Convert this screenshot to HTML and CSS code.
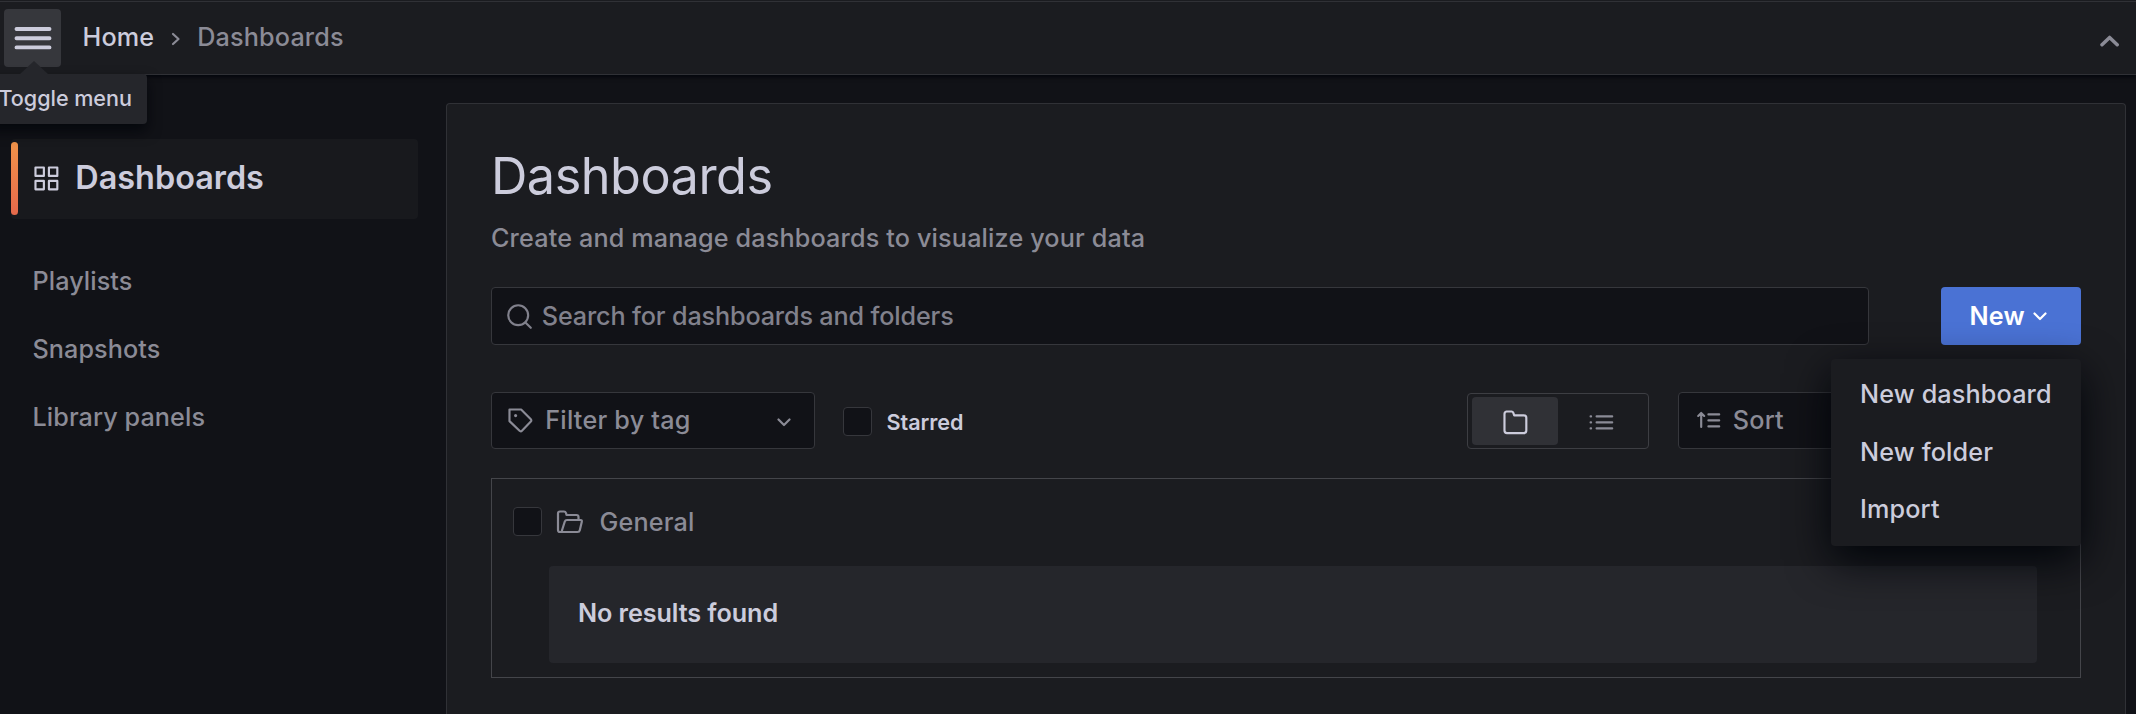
FILE: index.html
```html
<!DOCTYPE html>
<html lang="en">
<head>
<meta charset="utf-8">
<title>Dashboards</title>
<link rel="stylesheet" href="styles.css">
</head>
<body>
<header class="topbar">
  <button class="menu-toggle" aria-label="Toggle menu">
    <svg class="burger" viewBox="0 0 38 24"><path d="M2.500 3h33M2.500 12.200h33M2.500 21.400h33"/></svg>
    <span class="tooltip">Toggle menu</span>
  </button>
  <nav class="crumbs">
    <a class="crumb-home">Home</a>
    <svg class="crumb-sep" viewBox="0 0 10 14"><path d="M2 2l5.500 5L2 12"/></svg>
    <span>Dashboards</span>
  </nav>
  <svg class="collapse" viewBox="0 0 20 12"><path d="M2 9.700l7.600-7.300 7.600 7.300"/></svg>
</header>
<div class="body">
  <aside class="sidebar">
    <a class="side-active">
      <svg class="icon" viewBox="0 0 24 24"><path d="M2.900 2.900h7v7h-7zM14.100 2.900h7v7h-7zM2.900 14.100h7v7h-7zM14.100 14.100h7v7h-7z"/></svg>
      <span>Dashboards</span>
    </a>
    <a class="side-link">Playlists</a>
    <a class="side-link">Snapshots</a>
    <a class="side-link">Library panels</a>
  </aside>
  <main class="page">
    <h1 class="title">Dashboards</h1>
    <p class="subtitle">Create and manage dashboards to visualize your data</p>
    <div class="search-row">
      <div class="search">
        <svg class="icon" viewBox="0 0 24 24"><circle cx="11" cy="11" r="8.300"/><path d="M17 17l4.500 4.500"/></svg>
        <span>Search for dashboards and folders</span>
      </div>
      <div class="new-wrap">
        <button class="new-btn">New
          <svg class="chevron" viewBox="0 0 14 9"><path d="M1.500 1.500L7 7l5.500-5.500"/></svg>
        </button>
        <div class="menu">
          <a>New dashboard</a>
          <a>New folder</a>
          <a>Import</a>
        </div>
      </div>
    </div>
    <div class="filters">
      <div class="select tag-select">
        <svg class="icon" viewBox="0 0 24 24"><path d="M2.900 2.900h9.700l8.100 8.100a1.400 1.400 0 0 1 0 2l-7.400 7.700a1.400 1.400 0 0 1-2 0L2.900 12.600z"/><circle class="dot" cx="8" cy="8" r="1.300"/></svg>
        <span>Filter by tag</span>
        <svg class="chevron" viewBox="0 0 14 9"><path d="M1.500 1.500L7 7l5.500-5.500"/></svg>
      </div>
      <label class="starred"><span class="checkbox"></span>Starred</label>
      <div class="views">
        <span class="view view-on"><svg class="icon" viewBox="0 0 24 24"><path d="M4.500 2.900h4.300q1 0 1.400 1l.8 2.200h8q2.100 0 2.100 2.100v10.600q0 2.100-2.100 2.100H5q-2.100 0-2.100-2.100V5q0-2.100 2.100-2.100z"/></svg></span>
        <span class="view"><svg class="icon" viewBox="0 0 24 24"><path d="M8 7h13M8 12h13M8 17h13M3 7h.4M3 12h.4M3 17h.4"/></svg></span>
      </div>
      <div class="select sort-select">
        <svg class="icon" viewBox="0 0 24 24"><path d="M12 7h9M12 12h9M12 17h9M6 17.500V6.500M3.500 8.300l2.500-2.500 2.500 2.500"/></svg>
        <span>Sort</span>
      </div>
    </div>
    <section class="results">
      <div class="folder">
        <span class="checkbox"></span>
        <svg class="folder-icon" viewBox="0 0 28 24"><path d="M6 22H4Q2 22 2 20V3.500Q2 1.500 4 1.500H8Q9.500 1.500 10 3L10.500 5H20.500Q22.500 5 22.500 7V9.800M5.500 22L8.800 11.500Q9.300 10 11 10H24.500Q26.200 10 25.800 11.800L23.800 20.300Q23.400 22 21.500 22Z"/></svg>
        <span>General</span>
      </div>
      <div class="empty">No results found</div>
    </section>
  </main>
</div>
</body>
</html>
```
FILE: styles.css
```css
* { box-sizing: border-box; }
body {
  margin: 0;
  height: 714px;
  overflow: hidden;
  display: flex;
  flex-direction: column;
  background: #111217;
  color: #ccccdc;
  font: 500 25.200px/40px Inter, "Liberation Sans", sans-serif;
  letter-spacing: 0.150px;
}
button { font: inherit; letter-spacing: inherit; border: 0; padding: 0; }
svg { display: block; flex: none; fill: none; stroke: currentColor; stroke-width: 2.200; stroke-linecap: round; stroke-linejoin: round; }
.icon { width: 28.800px; height: 28.800px; stroke-width: 1.800; }
.icon .dot { fill: currentColor; stroke: none; }
.chevron { width: 14px; height: 9px; }

.topbar {
  position: relative;
  z-index: 2;
  flex: none;
  display: flex;
  align-items: center;
  height: 75px;
  padding: 0 16px 0 4px;
  background: #1b1c20;
  border-bottom: 1px solid #303136;
  box-shadow: inset 0 1px #1b1c20, inset 0 2px #303136, 0 2px 4px rgba(1, 4, 9, .85);
}
.menu-toggle {
  position: relative;
  display: grid;
  place-items: center;
  width: 57px;
  height: 58px;
  margin-top: 2px;
  background: #36373c;
  border-radius: 4px;
  color: #ccccdc;
}
.burger { width: 38px; height: 24px; margin-top: -1px; stroke-width: 3.900; }
.tooltip {
  position: absolute;
  top: 65px;
  left: -19px;
  width: 162px;
  height: 50px;
  padding-left: 13.500px;
  background: #25262b;
  border-radius: 4px;
  box-shadow: 0 7px 14px rgba(1, 4, 9, .75);
  font-size: 21.600px;
  line-height: 49px;
  letter-spacing: -0.050px;
  text-align: left;
  white-space: nowrap;
}
.tooltip::before {
  content: "";
  position: absolute;
  left: 35px;
  top: -13px;
  border: solid transparent;
  border-width: 0 14px 13px;
  border-bottom-color: #25262b;
}
.crumbs { display: flex; align-items: center; margin-left: 21.500px; color: #8b8b96; }
.crumb-home { color: #ccccdc; }
.crumb-sep { width: 10px; height: 14px; margin: 4px 16.500px 0 16.500px; }
.collapse { width: 20px; height: 12px; margin: 7px 0 0 auto; stroke-width: 3.500; color: #8b8b96; }

.body { flex: 1; min-height: 0; display: flex; }
.sidebar { width: 446px; padding: 64px 28px 0 11px; flex: none; }
.side-active {
  position: relative;
  display: flex;
  align-items: center;
  gap: 14.500px;
  height: 80px;
  margin-bottom: 28px;
  padding: 0 0 2px 21px;
  background: #18191d;
  border-radius: 4px;
  font-size: 32.400px;
  font-weight: 600;
  letter-spacing: 0;
}
.side-active::before {
  content: "";
  position: absolute;
  left: 0;
  top: 3px;
  width: 7px;
  height: 73px;
  border-radius: 4px;
  background: linear-gradient(#f0934a, #e5694b);
}
.side-link { display: block; height: 68px; padding-left: 21.500px; line-height: 68px; color: #8b8b96; letter-spacing: 0.080px; }

.page {
  flex: none;
  width: 1680px;
  margin-top: 28px;
  padding: 37px 44px 0;
  background: #1b1c20;
  border: 1px solid #303136;
  border-bottom: 0;
  border-radius: 4px 4px 0 0;
}
.title { margin: 0; font-size: 50.400px; line-height: 70px; font-weight: 400; letter-spacing: -0.500px; }
.subtitle { margin: 7px 0 29px; color: #8b8b96; }
.search-row { display: flex; justify-content: space-between; }
.search {
  display: flex;
  align-items: center;
  gap: 8px;
  width: 1378px;
  height: 58px;
  padding-left: 13px;
  background: #111217;
  border: 1px solid #36373c;
  border-radius: 4px;
  color: #81818c;
  letter-spacing: -0.150px;
}
.new-wrap { position: relative; z-index: 1; }
.new-btn {
  position: relative;
  display: flex;
  align-items: center;
  gap: 8px;
  width: 140px;
  height: 58px;
  padding-left: 28.500px;
  background: #4a72d4;
  border-radius: 4px;
  color: #fff;
  font-weight: 600;
}
.menu {
  position: absolute;
  top: 72px;
  right: 0;
  width: 250px;
  height: 187px;
  padding: 7px 0 0 29px;
  background: #1b1c20;
  border-radius: 4px;
  box-shadow: 0 14px 43px #010409;
}
.menu a { display: block; line-height: 57.600px; white-space: nowrap; }
.filters { display: flex; align-items: center; margin-top: 47px; height: 57px; }
.select {
  display: flex;
  align-items: center;
  height: 57px;
  background: #111217;
  border: 1px solid #36373c;
  border-radius: 4px;
  color: #8b8b96;
  letter-spacing: 0.220px;
}
.select span { margin-top: -2px; }
.tag-select { width: 324px; padding: 0 23px 0 14px; gap: 10.500px; }
.tag-select .chevron { margin: 3px 0 0 auto; }
.starred { display: flex; align-items: center; gap: 14.500px; margin: 2px 0 0 28px; font-size: 21.600px; font-weight: 600; letter-spacing: -0.050px; }
.checkbox { width: 29px; height: 29px; background: #111217; border: 1px solid #36373c; border-radius: 4px; }
.views {
  display: flex;
  width: 182px;
  height: 56px;
  margin: 1px 29px 0 auto;
  padding: 3px 4px;
  border: 1px solid #3d3e43;
  border-radius: 4px;
  color: #8b8b96;
}
.view { display: grid; place-items: center; width: 86px; height: 48px; border-radius: 4px; }
.view-on { background: #303136; color: #ccccdc; }
.view .icon { margin-top: 2px; }
.sort-select { width: 403px; padding-left: 15px; gap: 10px; }
.results { height: 200px; margin-top: 29px; padding: 28px 43px 0 21px; border: 1px solid #44454a; }
.folder { display: flex; align-items: center; height: 29px; color: #8b8b96; }
.folder-icon { width: 28px; height: 24px; margin: 0 15.500px 0 14px; }
.empty {
  height: 97px;
  margin: 30px 0 0 36px;
  padding-left: 29px;
  background: #25262b;
  border-radius: 4px;
  font-weight: 600;
  letter-spacing: -0.080px;
  line-height: 94px;
}
```
